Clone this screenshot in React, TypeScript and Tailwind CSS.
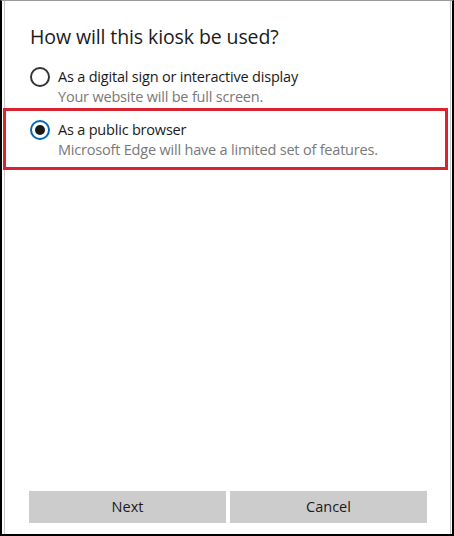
import React, { useState } from 'react';

interface Option {
    id: string;
    title: string;
    description: string;
}

const options: Option[] = [
    { id: 'sign', title: 'As a digital sign or interactive display', description: 'Your website will be full screen.' },
    { id: 'browser', title: 'As a public browser', description: 'Microsoft Edge will have a limited set of features.' },
];

function Radio({ checked }: { checked: boolean }) {
    return (
        <span
            className={`flex items-center justify-center w-[20px] h-[20px] rounded-full border-2 shrink-0 ${
                checked ? 'border-[#0067b8]' : 'border-[#333333]'
            }`}
        >
            {checked && <span className="w-[10px] h-[10px] rounded-full bg-[#1a1a1a]" />}
        </span>
    );
}

export default function App() {
    const [selected, setSelected] = useState('browser');

    return (
        <div
            className="w-[454px] h-[536px] bg-white border-l-2 border-r-2 border-b-2 border-t border-t-[#9a9a9a] border-black overflow-hidden"
            style={{ fontFamily: '"Open Sans", "Noto Sans", sans-serif' }}
        >
            <div className="ml-[2px] mr-[1px] h-full border-l border-r border-[#c8c8c8] flex flex-col">
                <h1 className="pl-[25px] pt-[22px] text-[19.5px] leading-[28px] text-[#1a1a1a] tracking-[-0.1px]">
                    How will this kiosk be used?
                </h1>

                <div className="flex flex-col">
                    {options.map((opt) => {
                        const isSelected = selected === opt.id;
                        return (
                            <button
                                key={opt.id}
                                onClick={() => setSelected(opt.id)}
                                className={
                                    isSelected
                                        ? 'flex items-start gap-[8px] text-left -ml-[2px] mr-[2px] border-[3px] border-[#d9232e] pl-[24px] pt-[9px] pb-[7px]'
                                        : 'flex items-start gap-[8px] text-left pl-[25px] pt-[16px] pb-[1px]'
                                }
                            >
                                <Radio checked={isSelected} />
                                <span className="flex flex-col">
                                    <span className="text-[14.5px] leading-[20px] text-[#1a1a1a] tracking-[-0.2px]">{opt.title}</span>
                                    <span className="text-[14.5px] leading-[20px] text-[#797979] tracking-[-0.2px]">{opt.description}</span>
                                </span>
                            </button>
                        );
                    })}
                </div>

                <div className="mt-auto mb-[11px] flex gap-[4px] pl-[24px] pr-[23px]">
                    <button className="flex-1 h-[32px] bg-[#cccccc] text-[14.5px] text-[#1a1a1a]">Next</button>
                    <button className="flex-1 h-[32px] bg-[#cccccc] text-[14.5px] text-[#1a1a1a]">Cancel</button>
                </div>
            </div>
        </div>
    );
}
